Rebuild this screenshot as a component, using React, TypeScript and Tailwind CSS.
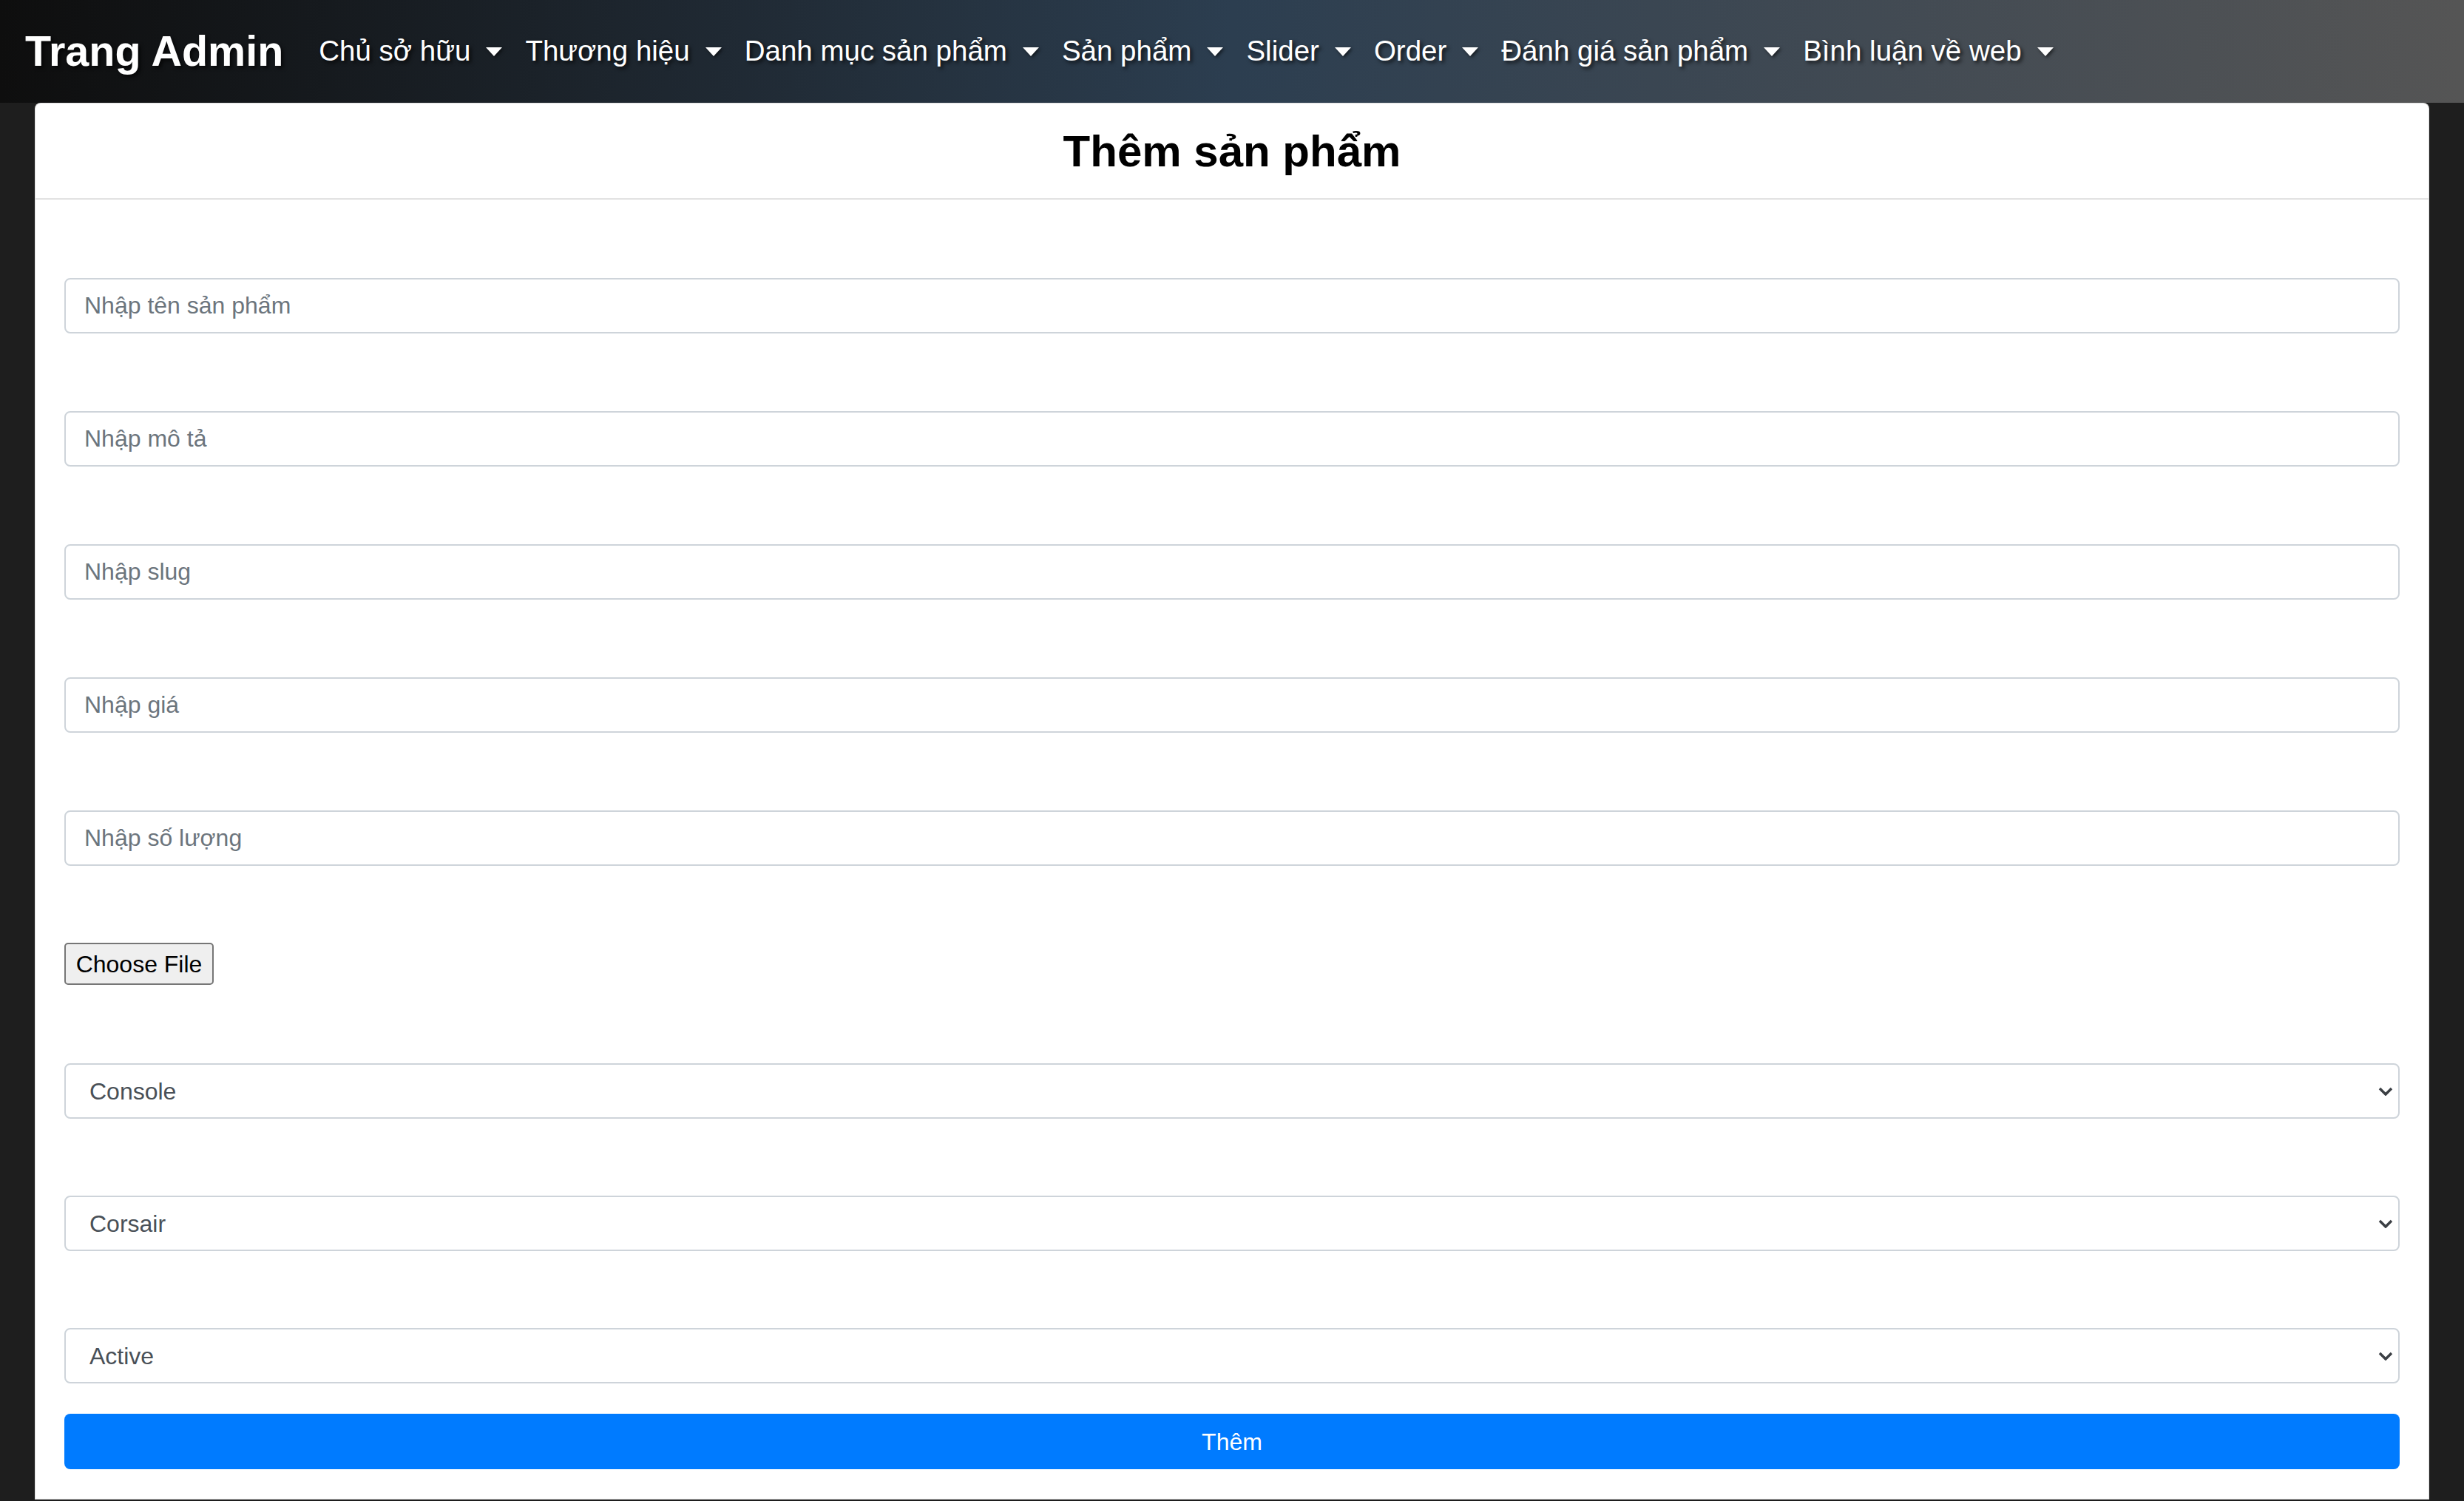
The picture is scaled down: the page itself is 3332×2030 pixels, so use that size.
import React from 'react'

const navItems = [
  'Chủ sở hữu',
  'Thương hiệu',
  'Danh mục sản phẩm',
  'Sản phẩm',
  'Slider',
  'Order',
  'Đánh giá sản phẩm',
  'Bình luận về web',
]

const inputs = ['Nhập tên sản phẩm', 'Nhập mô tả', 'Nhập slug', 'Nhập giá', 'Nhập số lượng']

const selects = ['Console', 'Corsair', 'Active']

const Caret = () => (
  <span className="ml-[21px] inline-block h-0 w-0 border-x-[11px] border-t-[12px] border-x-transparent border-t-white [filter:drop-shadow(2px_2px_2px_rgba(0,0,0,0.6))]" />
)

const Chevron = () => (
  <svg
    className="pointer-events-none absolute right-[9px] top-1/2 -translate-y-1/2"
    width="20"
    height="12"
    viewBox="0 0 20 12"
    fill="none"
  >
    <path d="M2 2l8 8 8-8" stroke="#3b3f44" strokeWidth="3.5" />
  </svg>
)

export default function App() {
  return (
    <div className="min-h-screen bg-[#1e1e1e] font-['Liberation_Sans',Arial,sans-serif]">
      {/* Navbar */}
      <nav className="flex h-[139px] items-center bg-linear-to-r from-[#0e0e0e] via-[#2c3e50] to-[#555555] px-[34px]">
        <span className="mr-[48px] text-[57.5px] font-bold leading-none text-white [text-shadow:3px_3px_5px_rgba(0,0,0,0.7)]">
          Trang Admin
        </span>
        <div className="flex items-center gap-[31px]">
          {navItems.map((item) => (
            <a
              key={item}
              href="#"
              className="flex items-center text-[38.5px] leading-none text-white [text-shadow:3px_3px_5px_rgba(0,0,0,0.7)]"
            >
              {item}
              <Caret />
            </a>
          ))}
        </div>
      </nav>

      {/* Card */}
      <div className="px-[47px]">
        <div className="rounded-t-[8px] border border-[rgba(0,0,0,0.125)] bg-white">
          <div className="flex h-[130px] items-center justify-center border-b-2 border-[#e2e2e2] pt-[2px]">
            <h1 className="text-[60px] font-bold text-black">Thêm sản phẩm</h1>
          </div>

          <form className="flex flex-col px-[39px] pb-[40px] pt-[106px]">
            {inputs.map((ph, i) => (
              <input
                key={ph}
                type="text"
                placeholder={ph}
                className={`h-[75px] w-full rounded-[8px] border-2 border-[#ced4da] px-[25px] text-[32px] text-[#495057] outline-none placeholder:text-[#6c757d] ${
                  i > 0 ? 'mt-[105px]' : ''
                }`}
              />
            ))}

            <div className="mt-[104px]">
              <button
                type="button"
                className="h-[57px] w-[202px] rounded-[5px] border-2 border-[#767676] bg-[#efefef] text-[32px] text-black"
              >
                Choose File
              </button>
            </div>

            {selects.map((opt, i) => (
              <div key={opt} className={`relative ${i === 0 ? 'mt-[106px]' : 'mt-[104px]'}`}>
                <select className="h-[75px] w-full appearance-none rounded-[8px] border-2 border-[#ced4da] bg-white px-[32px] text-[32px] text-[#495057] outline-none">
                  <option>{opt}</option>
                </select>
                <Chevron />
              </div>
            ))}

            <button
              type="button"
              className="mt-[41px] h-[75px] w-full rounded-[8px] bg-[#007bff] text-[32px] text-white"
            >
              Thêm
            </button>
          </form>
        </div>
      </div>
    </div>
  )
}
